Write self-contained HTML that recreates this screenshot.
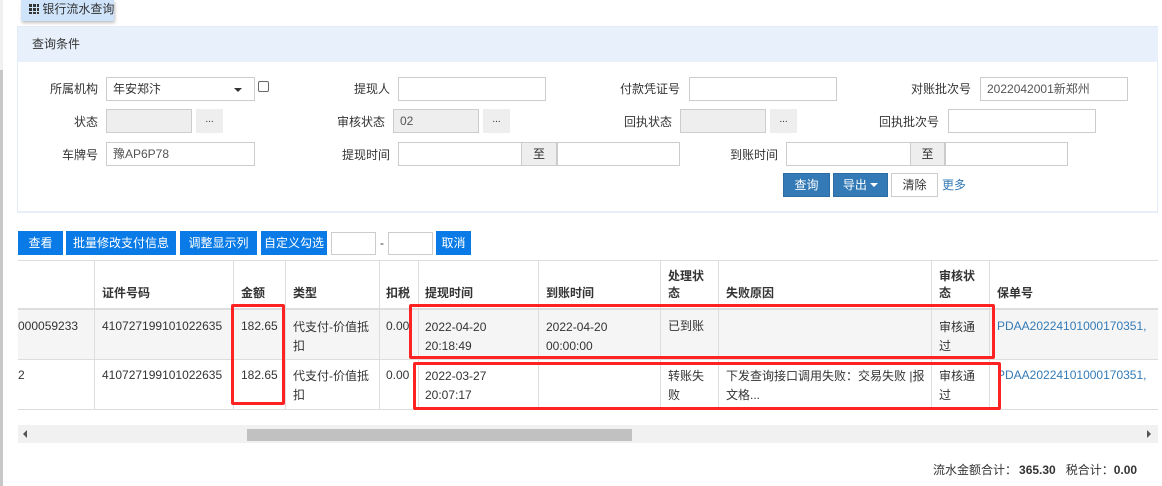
<!DOCTYPE html>
<html><head><meta charset="utf-8"><style>
*{box-sizing:border-box;margin:0;padding:0}
body{width:1162px;height:486px;overflow:hidden;background:#fff;position:relative;font-family:"Liberation Sans","Noto Sans CJK SC",sans-serif;font-size:12px;color:#333}
.a{position:absolute}
.lbl{position:absolute;text-align:right;line-height:24px;white-space:nowrap}
.in{position:absolute;height:24px;border:1px solid #ccc;background:#fff;line-height:22px;padding-left:6px;color:#555}
.g{background:#eee}
.dot{position:absolute;height:24px;width:27px;background:#eee;text-align:center;line-height:22px;font-size:10px}
.to{position:absolute;height:24px;background:#eee;border:1px solid #ccc;text-align:center;line-height:22px}
.bb{position:absolute;height:24px;top:231px;background:#0a7be6;color:#fff;text-align:center;line-height:24px}
.bq{position:absolute;top:173px;height:24px;background:#337ab7;border:1px solid #2e6da4;color:#fff;text-align:center;line-height:22px}
.vl{position:absolute;top:261px;width:1px;height:148px;background:#ddd}
.t{position:absolute;line-height:17px;white-space:nowrap}
.rb{position:absolute;border:3px solid #f22;border-radius:2px}
</style></head><body>
<div class="a" style="left:0;top:0;width:3px;height:70px;background:#f0f0f0"></div>
<div class="a" style="left:0;top:70px;width:3px;height:416px;background:#c8c8c8"></div>
<div class="a" style="left:21px;top:0;width:93px;height:21px;background:#cfe4fb;box-shadow:1px 2px 3px rgba(0,0,0,.25);line-height:18px;padding-left:8px;font-size:12px;white-space:nowrap">
<span style="display:inline-block;width:10px;height:10px;vertical-align:-1px;background:linear-gradient(#333,#333) 0 0/3px 3px,linear-gradient(#333,#333) 4px 0/3px 3px,linear-gradient(#333,#333) 8px 0/2px 3px,linear-gradient(#333,#333) 0 4px/3px 3px,linear-gradient(#333,#333) 4px 4px/3px 3px,linear-gradient(#333,#333) 8px 4px/2px 3px,linear-gradient(#333,#333) 0 8px/3px 2px,linear-gradient(#333,#333) 4px 8px/3px 2px,linear-gradient(#333,#333) 8px 8px/2px 2px;background-repeat:no-repeat"></span>&nbsp;银行流水查询</div>
<div class="a" style="left:17px;top:26px;width:1141px;height:187px;border:1px solid #e1ecf8;border-bottom:2px solid #e6eff9"></div>
<div class="a" style="left:18px;top:27px;width:1140px;height:35px;background:#e8f1fb;line-height:34px;padding-left:14px">查询条件</div>

<div class="lbl" style="left:30px;width:68px;top:77px">所属机构</div>
<div class="in" style="left:106px;top:77px;width:149px;color:#333">年安郑汴<span style="position:absolute;right:12px;top:10px;border:4px solid transparent;border-top:4px solid #333;border-bottom:0"></span></div>
<div class="a" style="left:258px;top:81px;width:11px;height:11px;border:1px solid #666;border-radius:2px"></div>
<div class="lbl" style="left:320px;width:70px;top:77px">提现人</div>
<div class="in" style="left:398px;top:77px;width:148px"></div>
<div class="lbl" style="left:600px;width:80px;top:77px">付款凭证号</div>
<div class="in" style="left:689px;top:77px;width:148px"></div>
<div class="lbl" style="left:880px;width:91px;top:77px">对账批次号</div>
<div class="in" style="left:980px;top:77px;width:148px">2022042001新郑州</div>

<div class="lbl" style="left:30px;width:68px;top:110px">状态</div>
<div class="in g" style="left:106px;top:109px;width:86px"></div>
<div class="dot" style="left:196px;top:109px">...</div>
<div class="lbl" style="left:310px;width:75px;top:110px">审核状态</div>
<div class="in g" style="left:393px;top:109px;width:86px">02</div>
<div class="dot" style="left:483px;top:109px">...</div>
<div class="lbl" style="left:600px;width:72px;top:110px">回执状态</div>
<div class="in g" style="left:680px;top:109px;width:86px"></div>
<div class="dot" style="left:770px;top:109px">...</div>
<div class="lbl" style="left:850px;width:89px;top:110px">回执批次号</div>
<div class="in" style="left:948px;top:109px;width:148px"></div>

<div class="lbl" style="left:30px;width:68px;top:143px">车牌号</div>
<div class="in" style="left:106px;top:142px;width:149px">豫AP6P78</div>
<div class="lbl" style="left:320px;width:70px;top:143px">提现时间</div>
<div class="in" style="left:398px;top:142px;width:124px"></div>
<div class="to" style="left:521px;top:142px;width:36px">至</div>
<div class="in" style="left:557px;top:142px;width:123px"></div>
<div class="lbl" style="left:700px;width:78px;top:143px">到账时间</div>
<div class="in" style="left:786px;top:142px;width:125px"></div>
<div class="to" style="left:910px;top:142px;width:35px">至</div>
<div class="in" style="left:945px;top:142px;width:123px"></div>

<div class="bq" style="left:783px;width:47px">查询</div>
<div class="bq" style="left:833px;width:55px">导出 <span style="display:inline-block;border:4px solid transparent;border-top:4px solid #fff;border-bottom:0;vertical-align:2px"></span></div>
<div class="bq" style="left:891px;width:47px;background:#fff;border-color:#ccc;color:#333">清除</div>
<div class="a" style="left:942px;top:173px;line-height:24px;color:#337ab7">更多</div>

<div class="bb" style="left:18px;width:45px">查看</div>
<div class="bb" style="left:66px;width:110px">批量修改支付信息</div>
<div class="bb" style="left:180px;width:77px">调整显示列</div>
<div class="bb" style="left:261px;width:66px">自定义勾选</div>
<div class="in" style="left:331px;top:232px;width:45px;height:23px"></div>
<div class="a" style="left:380px;top:236px">-</div>
<div class="in" style="left:388px;top:232px;width:45px;height:23px"></div>
<div class="bb" style="left:436px;width:35px">取消</div>

<div class="a" style="left:18px;top:260px;width:1140px;height:1px;background:#ddd"></div>
<div class="a" style="left:18px;top:308px;width:1140px;height:2px;background:#ddd"></div>
<div class="a" style="left:18px;top:310px;width:1140px;height:49px;background:#f5f5f5"></div>
<div class="a" style="left:18px;top:359px;width:1140px;height:1px;background:#ddd"></div>
<div class="a" style="left:18px;top:409px;width:1140px;height:1px;background:#ddd"></div>
<div class="vl" style="left:94px"></div><div class="vl" style="left:233px"></div><div class="vl" style="left:285px"></div><div class="vl" style="left:379px"></div><div class="vl" style="left:418px"></div><div class="vl" style="left:538px"></div><div class="vl" style="left:660px"></div><div class="vl" style="left:718px"></div><div class="vl" style="left:931px"></div><div class="vl" style="left:989px"></div>

<div style="font-weight:bold">
<div class="t" style="left:102px;top:285px">证件号码</div>
<div class="t" style="left:241px;top:285px">金额</div>
<div class="t" style="left:293px;top:285px">类型</div>
<div class="t" style="left:386px;top:285px">扣税</div>
<div class="t" style="left:425px;top:285px">提现时间</div>
<div class="t" style="left:546px;top:285px">到账时间</div>
<div class="t" style="left:668px;top:268px">处理状<br>态</div>
<div class="t" style="left:726px;top:285px">失败原因</div>
<div class="t" style="left:939px;top:268px">审核状<br>态</div>
<div class="t" style="left:997px;top:285px">保单号</div>
</div>

<div class="t" style="left:18px;top:318px">000059233</div>
<div class="t" style="left:102px;top:318px">410727199101022635</div>
<div class="t" style="left:241px;top:318px">182.65</div>
<div class="t" style="left:293px;top:318px;line-height:19px">代支付-价值抵<br>扣</div>
<div class="t" style="left:386px;top:318px">0.00</div>
<div class="t" style="left:425px;top:318px;line-height:19px">2022-04-20<br>20:18:49</div>
<div class="t" style="left:546px;top:318px;line-height:19px">2022-04-20<br>00:00:00</div>
<div class="t" style="left:668px;top:318px">已到账</div>
<div class="t" style="left:939px;top:318px;line-height:19px">审核通<br>过</div>
<div class="t" style="left:997px;top:318px;color:#337ab7">PDAA20224101000170351,</div>

<div class="t" style="left:18px;top:367px">2</div>
<div class="t" style="left:102px;top:367px">410727199101022635</div>
<div class="t" style="left:241px;top:367px">182.65</div>
<div class="t" style="left:293px;top:367px;line-height:19px">代支付-价值抵<br>扣</div>
<div class="t" style="left:386px;top:367px">0.00</div>
<div class="t" style="left:425px;top:367px;line-height:19px">2022-03-27<br>20:07:17</div>
<div class="t" style="left:668px;top:367px;line-height:19px">转账失<br>败</div>
<div class="t" style="left:726px;top:367px;line-height:19px">下发查询接口调用失败：交易失败 |报<br>文格...</div>
<div class="t" style="left:939px;top:367px;line-height:19px">审核通<br>过</div>
<div class="t" style="left:997px;top:367px;color:#337ab7">PDAA20224101000170351,</div>

<div class="rb" style="left:231px;top:304px;width:54px;height:101px"></div>
<div class="rb" style="left:409px;top:304px;width:586px;height:55px"></div>
<div class="rb" style="left:413px;top:362px;width:588px;height:48px"></div>

<div class="a" style="left:18px;top:425px;width:1140px;height:18px;background:#f1f1f1"></div>
<div class="a" style="left:247px;top:429px;width:385px;height:12px;background:#c1c1c1"></div>
<div class="a" style="left:23px;top:430px;border:4px solid transparent;border-right:4px solid #555;border-left:0"></div>
<div class="a" style="left:1147px;top:430px;border:4px solid transparent;border-left:4px solid #555;border-right:0"></div>

<div class="a" style="left:933px;top:462px;line-height:17px;white-space:nowrap">流水金额合计：<b style="margin:0 10px 0 2px">365.30</b>税合计：<b>0.00</b></div>
</body></html>
